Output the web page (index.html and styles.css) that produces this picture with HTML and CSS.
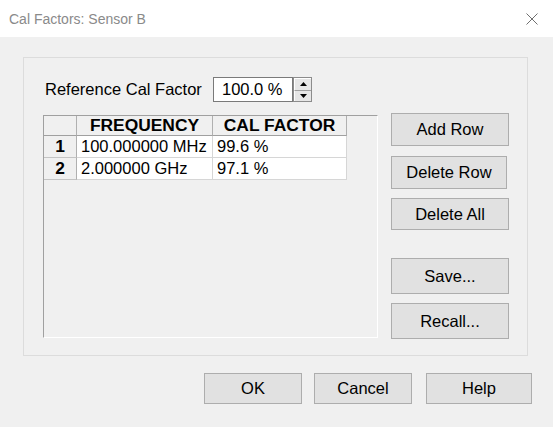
FILE: index.html
```html
<!DOCTYPE html>
<html>
<head>
<meta charset="utf-8">
<link rel="stylesheet" href="styles.css">
</head>
<body>
<div class="titlebar">
  <span class="title">Cal Factors: Sensor B</span>
  <svg class="close" width="12" height="12" viewBox="0 0 12 12"><path d="M0.5 0.5 L11.5 11.5 M11.5 0.5 L0.5 11.5" stroke="#6f6f6f" stroke-width="1" fill="none"/></svg>
</div>
<div class="content">
  <div class="group">
    <div class="refrow">
      <span class="reflabel">Reference Cal Factor</span>
      <div class="input">100.0 %</div>
      <div class="spin">
        <div class="spin-btn"><svg width="7" height="4" viewBox="0 0 7 4"><path d="M3.5 0 L7 4 L0 4 Z" fill="#000"/></svg></div>
        <div class="spin-btn spin-down"><svg width="7" height="4" viewBox="0 0 7 4"><path d="M0 0 L7 0 L3.5 4 Z" fill="#000"/></svg></div>
      </div>
    </div>
    <div class="main">
      <div class="grid">
        <div class="cell hdr corner"></div>
        <div class="cell hdr">FREQUENCY</div>
        <div class="cell hdr">CAL FACTOR</div>
        <div class="cell rownum">1</div>
        <div class="cell data">100.000000 MHz</div>
        <div class="cell data">99.6 %</div>
        <div class="cell rownum">2</div>
        <div class="cell data">2.000000 GHz</div>
        <div class="cell data">97.1 %</div>
      </div>
      <div class="side">
        <div class="btn b-add">Add Row</div>
        <div class="btn b-delrow">Delete Row</div>
        <div class="btn b-delall">Delete All</div>
        <div class="btn b-save">Save...</div>
        <div class="btn b-recall">Recall...</div>
      </div>
    </div>
  </div>
  <div class="footer">
    <div class="btn b-ok">OK</div>
    <div class="btn b-cancel">Cancel</div>
    <div class="btn b-help">Help</div>
  </div>
</div>
</body>
</html>
```
FILE: styles.css
```css
html, body {
  margin: 0;
  padding: 0;
}
body {
  background: #f0f0f0;
  font-family: "Liberation Sans", Arial, sans-serif;
  font-size: 16.5px;
  color: #000;
  width: 553px;
  height: 427px;
  overflow: hidden;
}
.titlebar {
  height: 37px;
  background: #fff;
  display: flex;
  align-items: center;
  justify-content: space-between;
  padding: 0 15px 0 9px;
}
.title {
  font-size: 14px;
  color: #8a8a8a;
}
.close {
  display: block;
}
.content {
  padding: 20px 0 0 23px;
}
.group {
  box-sizing: border-box;
  width: 505px;
  height: 299px;
  border: 1px solid #dcdcdc;
  padding: 19px 0 0 19px;
}
.refrow {
  display: flex;
  align-items: center;
  height: 25px;
  padding-left: 2px;
}
.reflabel {
  width: 168px;
}
.input {
  box-sizing: border-box;
  width: 80px;
  height: 25px;
  border: 1px solid #7a7a7a;
  background: #fff;
  padding-left: 8px;
  line-height: 23px;
}
.spin {
  box-sizing: border-box;
  width: 19px;
  height: 25px;
  border: 1px solid #8c8c8c;
  display: flex;
  flex-direction: column;
  background: #e6e6e6;
}
.spin-btn {
  flex: 1;
  display: flex;
  align-items: center;
  justify-content: center;
  border-top: 1px solid #fff;
  border-left: 1px solid #fff;
}
.spin-down {
  border-top: 1px solid #a0a0a0;
}
.spin-btn svg {
  display: block;
}
.main {
  display: flex;
  align-items: flex-start;
  margin-top: 11px;
}
.grid {
  box-sizing: border-box;
  width: 335px;
  height: 223px;
  margin-top: 2px;
  border-left: 1px solid #a0a0a0;
  border-top: 1px solid #a0a0a0;
  border-right: 1px solid #fff;
  border-bottom: 1px solid #fff;
  display: grid;
  grid-template-columns: 33px 136px 134px;
  grid-template-rows: 20px 22px 22px;
  align-content: start;
  justify-content: start;
}
.cell {
  box-sizing: border-box;
  border-right: 1px solid #d6d6d6;
  border-bottom: 1px solid #d6d6d6;
  display: flex;
  align-items: center;
  white-space: nowrap;
}
.hdr {
  background: #f0f0f0;
  font-weight: bold;
  font-size: 17.4px;
  justify-content: center;
  border-right-color: #b0b0b0;
  border-bottom-color: #a0a0a0;
}
.rownum {
  background: #f0f0f0;
  font-weight: bold;
  font-size: 17.4px;
  justify-content: center;
  border-right-color: #b0b0b0;
  border-bottom-color: #c4c4c4;
}
.data {
  background: #fff;
  padding-left: 4px;
}
.side {
  display: flex;
  flex-direction: column;
  width: 118px;
  margin-left: 13px;
}
.btn {
  box-sizing: border-box;
  border: 1px solid #adadad;
  background: #e1e1e1;
  display: flex;
  align-items: center;
  justify-content: center;
  white-space: nowrap;
}
.b-add { height: 33px; }
.b-delrow { height: 33px; width: 116px; margin-top: 10px; }
.b-delall { height: 32px; margin-top: 9px; }
.b-save { height: 36px; margin-top: 28px; }
.b-recall { height: 36px; margin-top: 9px; }
.footer {
  display: flex;
  padding-left: 181px;
  margin-top: 17px;
}
.footer .btn { height: 31px; }
.b-ok { width: 98px; }
.b-cancel { width: 98px; margin-left: 12px; }
.b-help { width: 106px; margin-left: 14px; }
```
